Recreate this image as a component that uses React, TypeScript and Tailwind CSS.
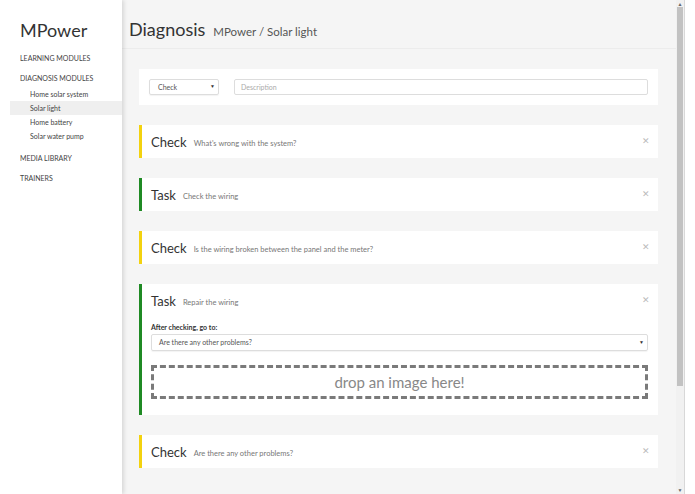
import * as React from "react";

const modules = ["Home solar system", "Solar light", "Home battery", "Solar water pump"];

type Step = {
    kind: "Check" | "Task";
    text: string;
    extra?: boolean;
};

const steps: Step[] = [
    { kind: "Check", text: "What's wrong with the system?" },
    { kind: "Task", text: "Check the wiring" },
    { kind: "Check", text: "Is the wiring broken between the panel and the meter?" },
    { kind: "Task", text: "Repair the wiring", extra: true },
    { kind: "Check", text: "Are there any other problems?" },
];

function Sidebar() {
    return (
        <aside className="w-[122px] shrink-0 bg-white shadow-[2px_0_4px_rgba(0,0,0,0.12)] z-10 pt-[20px]">
            <div className="pl-[20px] text-[18px] leading-[20px] text-[#333]">MPower</div>
            <nav className="mt-[13px] text-[7px] text-[#444]">
                <div className="pl-[20px] h-[10px] leading-[10px]">LEARNING MODULES</div>
                <div className="pl-[20px] h-[10px] leading-[10px] mt-[10px]">DIAGNOSIS MODULES</div>
                <ul className="mt-[4px] ml-[10px]">
                    {modules.map((m) => (
                        <li
                            key={m}
                            className={
                                m === "Solar light"
                                    ? "pl-[20px] h-[14px] leading-[14px] bg-[#efefef]"
                                    : "pl-[20px] h-[14px] leading-[14px]"
                            }
                        >
                            {m}
                        </li>
                    ))}
                </ul>
                <div className="pl-[20px] h-[10px] leading-[10px] mt-[10px]">MEDIA LIBRARY</div>
                <div className="pl-[20px] h-[10px] leading-[10px] mt-[10px]">TRAINERS</div>
            </nav>
        </aside>
    );
}

function StepCard({ step }: { step: Step }) {
    const bar = step.kind === "Check" ? "border-[#f3d20f]" : "border-[#1f8a24]";
    return (
        <div className={`bg-white border-l-[3px] ${bar} pl-[9px] pr-[10px] ${step.extra ? "pb-[16px]" : ""}`}>
            <div className="flex items-center h-[33px]">
                <span className="text-[13px] text-[#333] mt-[2px]">{step.kind}</span>
                <span className="ml-[7px] text-[7.5px] text-[#777] mt-[5px]">{step.text}</span>
                <span className="ml-auto mr-[-2px] text-[9px] text-[#bbb] mt-[-2px]">✕</span>
            </div>
            {step.extra && (
                <div>
                    <div className="mt-[5px] text-[7px] font-bold text-[#333] leading-[10px]">
                        After checking, go to:
                    </div>
                    <div className="mt-[2px] h-[17px] border border-[#ddd] rounded-[2px] flex items-center pl-[7px] pr-[3px] text-[7px] text-[#555] shadow-[0_1px_1px_rgba(0,0,0,0.05)]">
                        <span>Are there any other problems?</span>
                        <span className="ml-auto text-[5px] text-[#333]">▼</span>
                    </div>
                    <div className="mt-[14px] h-[34px] border-[3px] border-dashed border-[#7a7a7a] flex items-center justify-center text-[15px] text-[#888]">
                        drop an image here!
                    </div>
                </div>
            )}
        </div>
    );
}

function Scrollbar() {
    return (
        <div className="w-[9px] shrink-0 bg-[#f1f1f1] border-r border-[#d8d8d8] flex flex-col items-center">
            <div className="text-[5px] leading-[6px] text-[#666] mt-[1px]">▲</div>
            <div className="w-[6px] h-[379px] bg-[#c2c2c2]" />
            <div className="mt-auto mb-[1px] text-[5px] leading-[6px] text-[#666]">▼</div>
        </div>
    );
}

export default function App() {
    return (
        <div
            className="flex w-[695px] h-[494px] bg-white overflow-hidden"
            style={{ fontFamily: "Lato, 'Open Sans', sans-serif" }}
        >
            <Sidebar />
            <main className="flex-1 bg-[#f5f5f5] flex flex-col">
                <header className="h-[49px] border-b border-[#ececec] flex items-baseline pl-[7px] pt-[17px]">
                    <h1 className="text-[18px] leading-[24px] text-[#333]">Diagnosis</h1>
                    <span className="ml-[8px] text-[11.5px] text-[#555]">MPower / Solar light</span>
                </header>
                <div className="pl-[17px] pr-[18px] pt-[20px] flex flex-col gap-[20px]">
                    <div className="bg-white h-[36px] flex items-center px-[10px] gap-[15px]">
                        <div className="w-[70px] h-[16px] border border-[#ddd] rounded-[2px] flex items-center pl-[8px] pr-[3px] text-[7px] text-[#555] shadow-[0_1px_1px_rgba(0,0,0,0.05)]">
                            <span>Check</span>
                            <span className="ml-auto text-[5px] text-[#333]">▼</span>
                        </div>
                        <div className="flex-1 h-[16px] border border-[#ddd] rounded-[2px] flex items-center px-[6px] text-[7px] text-[#aaa]">
                            Description
                        </div>
                    </div>
                    {steps.map((s, i) => (
                        <StepCard key={i} step={s} />
                    ))}
                </div>
            </main>
            <Scrollbar />
            <div className="w-[10px] shrink-0 bg-white" />
        </div>
    );
}
